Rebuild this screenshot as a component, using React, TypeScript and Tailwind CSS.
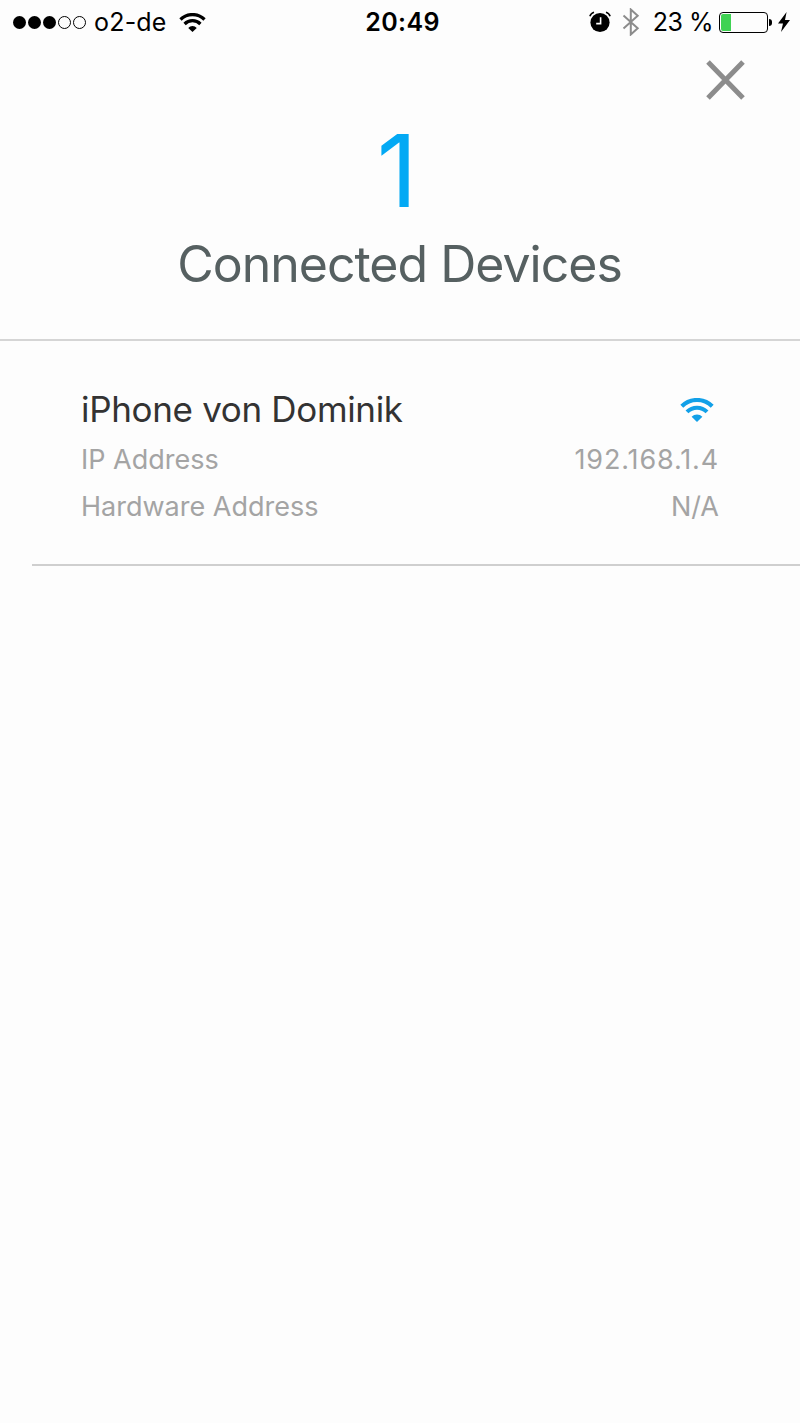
import type { ReactNode } from "react";

const SIGNAL_STRENGTH = 3;
const SIGNAL_MAX = 5;
const BATTERY_LEVEL = 23;

const devices = [
  { name: "iPhone von Dominik", ip: "192.168.1.4", hardware: "N/A" },
];

function WifiIcon({ className }: { className?: string }) {
  return (
    <svg viewBox="0 0 34 24" className={className} fill="none">
      <path d="M1.8 8.2a21.6 21.6 0 0 1 30.4 0" stroke="currentColor" strokeWidth="4.1" />
      <path d="M7 13.9a14.2 14.2 0 0 1 20 0" stroke="currentColor" strokeWidth="4.1" />
      <path d="M11.6 18.8a7.6 7.6 0 0 1 10.8 0L17 24z" fill="currentColor" />
    </svg>
  );
}

function AlarmIcon() {
  return (
    <svg viewBox="0 0 22 22" className="h-[22px] w-[22px]" fill="none">
      <circle cx="11" cy="11.5" r="9.6" fill="#000" />
      <path d="M.9 5.2A6 6 0 0 1 5 1.2M21.1 5.2a6 6 0 0 0-4.1-4" stroke="#000" strokeWidth="1.6" />
      <path d="M11.6 6.2v6.4H7.2" stroke="#fff" strokeWidth="1.6" />
    </svg>
  );
}

function BluetoothIcon() {
  return (
    <svg viewBox="0 0 18 28" className="h-7 w-[18px]" fill="none" stroke="#8c8c8c" strokeWidth="2">
      <path d="M1.5 7.6l14.2 12.6-6.9 6.3v-25l6.9 6.3L1.5 20.4" />
    </svg>
  );
}

function StatusBar() {
  return (
    <div className="flex h-11 items-center text-[25px] text-black">
      <div className="flex flex-1 items-center pl-[13px]">
        <div className="flex gap-[2px]">
          {Array.from({ length: SIGNAL_MAX }, (_, i) => (
            <span
              key={i}
              className={
                i < SIGNAL_STRENGTH
                  ? "size-[13px] rounded-full bg-black"
                  : "size-[13px] rounded-full border border-black"
              }
            />
          ))}
        </div>
        <span className="ml-2 pt-[2px] tracking-[0.2px]">o2-de</span>
        <WifiIcon className="ml-3 h-[19px] w-[27px]" />
      </div>
      <span className="pt-[2px] pl-[2px] font-semibold tracking-[0.4px]">20:49</span>
      <div className="flex flex-1 items-center justify-end pr-[10px]">
        <AlarmIcon />
        <span className="ml-[11px]">
          <BluetoothIcon />
        </span>
        <span className="ml-[13px] pt-[2px] tracking-[-0.5px] whitespace-nowrap">{BATTERY_LEVEL} %</span>
        <div className="ml-[6px] flex h-[21px] w-[49px] rounded-[4px] border-[1.5px] border-black p-px">
          <div className="rounded-l-[2px] bg-[#3fd253]" style={{ width: `${BATTERY_LEVEL}%` }} />
        </div>
        <div className="ml-px h-[7px] w-[3px] rounded-r-full bg-black" />
        <svg viewBox="0 0 12 20" className="ml-[6px] h-5 w-3">
          <path d="M8.6 0L0 11.4h5L3 20l9-12H7z" fill="#000" />
        </svg>
      </div>
    </div>
  );
}

function DetailRow({ label, children }: { label: string; children: ReactNode }) {
  return (
    <div className="flex h-[47px] items-center justify-between text-[27px] text-[#a4a4a4]">
      <span>{label}</span>
      {children}
    </div>
  );
}

export default function App() {
  return (
    <div className="min-h-[1423px] w-full bg-[#fdfdfd] font-['Inter',sans-serif]">
      <StatusBar />

      <header className="flex h-[297px] flex-col border-b-2 border-[#d5d5d5] pt-4">
        <button className="mr-[55px] size-10 self-end" aria-label="Close">
          <svg viewBox="0 0 40 40" className="size-10" stroke="#8c8c8c" strokeWidth="5">
            <path d="M3 2l35 36M38 2L3 38" />
          </svg>
        </button>
        <div className="mt-[21px] pr-[6px] text-center text-[100px] leading-[100px] text-[#03a9f4]">
          {devices.length}
        </div>
        <h1 className="pr-px text-center text-[50px] leading-[86px] tracking-[-1px] text-[#566061]">
          Connected Devices
        </h1>
      </header>

      <ul>
        {devices.map((device) => (
          <li key={device.ip} className="ml-8 border-b-2 border-[#cfcfcf] pt-[42px] pr-[82px] pb-[33px] pl-[49px]">
            <div className="mb-px flex h-[53px] items-center justify-between">
              <h2 className="text-[35px] tracking-[-0.33px] text-[#333]">{device.name}</h2>
              <WifiIcon className="mr-1 h-6 w-[34px] text-[#12a0e8]" />
            </div>
            <DetailRow label="IP Address">
              <span className="-mr-px tracking-[0.85px]">{device.ip}</span>
            </DetailRow>
            <DetailRow label="Hardware Address">
              <span className="-mr-px">{device.hardware}</span>
            </DetailRow>
          </li>
        ))}
      </ul>
    </div>
  );
}
